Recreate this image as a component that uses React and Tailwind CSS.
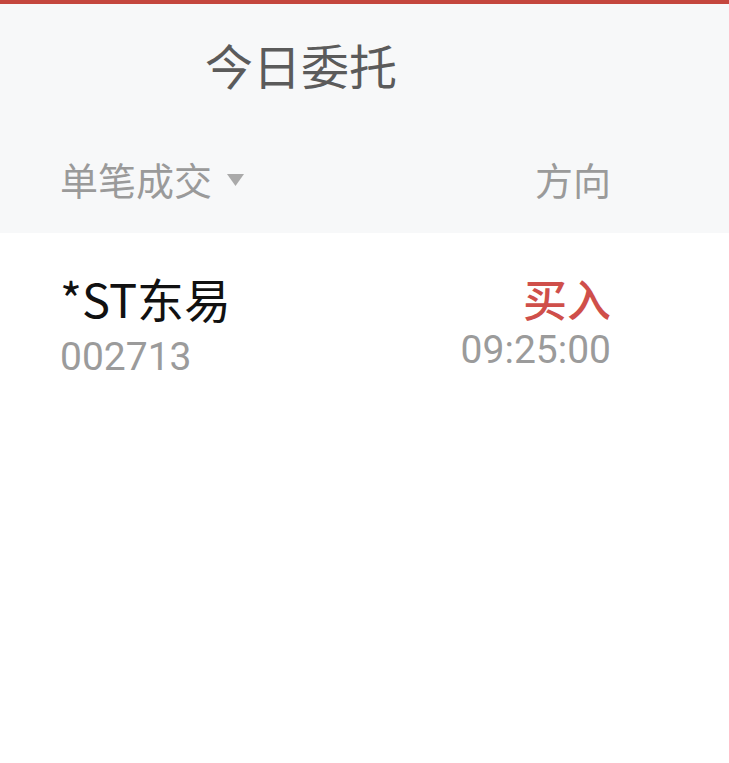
import React from "react";

const orders = [
  { name: "*ST东易", code: "002713", side: "买入", time: "09:25:00" },
];

const App = () => {
  return (
    <div className="min-h-screen w-full bg-white font-['Noto_Sans_CJK_SC','Noto_Sans',sans-serif]">
      {/* top accent */}
      <div className="h-[4px] bg-[#c4463e]" />

      {/* Header */}
      <div className="bg-[#f7f8f9]">
        <div className="h-[120px] flex items-center pl-[205px]">
          <h1 className="text-[48px] leading-none text-[#5b5b5b]">今日委托</h1>
        </div>
        <div className="h-[109px] flex items-center justify-between pl-[60px] pr-[118px] text-[38px] leading-none text-[#9a9a9a]">
          <div className="flex items-center gap-[15px]">
            <span>单笔成交</span>
            <svg width="17" height="12" viewBox="0 0 17 12" className="mt-[2px]">
              <path d="M0 0h17L8.5 12z" fill="#aaaaaa" />
            </svg>
          </div>
          <span>方向</span>
        </div>
      </div>

      {/* Rows */}
      {orders.map((o) => (
        <div key={o.code} className="flex justify-between pl-[60px] pr-[118px] pt-[41px]">
          <div className="flex flex-col">
            <span className="text-[47px] leading-none text-[#111111]">{o.name}</span>
            <span className="mt-[17px] font-['Roboto',sans-serif] text-[39px] leading-none text-[#9b9b9b]">
              {o.code}
            </span>
          </div>
          <div className="flex flex-col items-end pt-[2px]">
            <span className="text-[44px] leading-none font-medium text-[#cf4f4a]">{o.side}</span>
            <span className="mt-[11px] font-['Roboto',sans-serif] text-[39px] leading-none text-[#9b9b9b]">
              {o.time}
            </span>
          </div>
        </div>
      ))}
    </div>
  );
};

export default App;
